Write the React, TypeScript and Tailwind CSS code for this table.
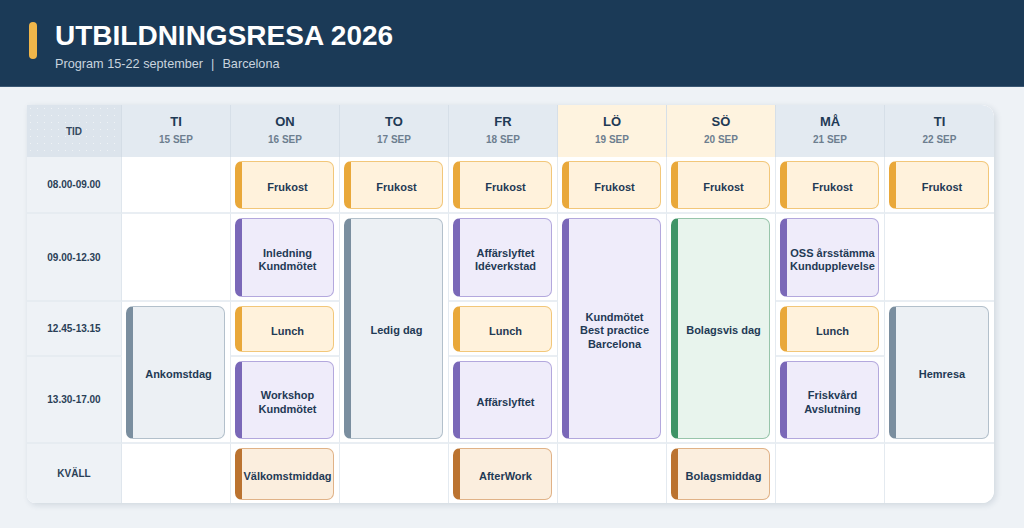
import React from "react";

type Kind = "o" | "p" | "g" | "gr" | "b";

const kindCls: Record<Kind, string> = {
  o: "bg-[#fff2dc] border-[#f2c77a] border-l-[#e9a83a]",
  p: "bg-[#efecfa] border-[#b3a8dd] border-l-[#7a68b8]",
  g: "bg-[#e8f4ed] border-[#98c5ab] border-l-[#3f9467]",
  gr: "bg-[#ecf0f4] border-[#b3c0cb] border-l-[#7a8e9f]",
  b: "bg-[#fbeede] border-[#e0b287] border-l-[#bb7330]",
};

const colStart = [
  "col-start-1",
  "col-start-2",
  "col-start-3",
  "col-start-4",
  "col-start-5",
  "col-start-6",
  "col-start-7",
  "col-start-8",
  "col-start-9",
];
const rowStart = ["row-start-1", "row-start-2", "row-start-3", "row-start-4", "row-start-5", "row-start-6"];
const rowSpan = ["row-span-1", "row-span-1", "row-span-2", "row-span-3"];

type Item = { row: number; span: number; kind?: Kind; lines?: string[] };

const days: { name: string; date: string; weekend?: boolean; items: Item[] }[] = [
  {
    name: "TI",
    date: "15 SEP",
    items: [
      { row: 1, span: 1 },
      { row: 2, span: 1 },
      { row: 3, span: 2, kind: "gr", lines: ["Ankomstdag"] },
      { row: 5, span: 1 },
    ],
  },
  {
    name: "ON",
    date: "16 SEP",
    items: [
      { row: 1, span: 1, kind: "o", lines: ["Frukost"] },
      { row: 2, span: 1, kind: "p", lines: ["Inledning", "Kundmötet"] },
      { row: 3, span: 1, kind: "o", lines: ["Lunch"] },
      { row: 4, span: 1, kind: "p", lines: ["Workshop", "Kundmötet"] },
      { row: 5, span: 1, kind: "b", lines: ["Välkomstmiddag"] },
    ],
  },
  {
    name: "TO",
    date: "17 SEP",
    items: [
      { row: 1, span: 1, kind: "o", lines: ["Frukost"] },
      { row: 2, span: 3, kind: "gr", lines: ["Ledig dag"] },
      { row: 5, span: 1 },
    ],
  },
  {
    name: "FR",
    date: "18 SEP",
    items: [
      { row: 1, span: 1, kind: "o", lines: ["Frukost"] },
      { row: 2, span: 1, kind: "p", lines: ["Affärslyftet", "Idéverkstad"] },
      { row: 3, span: 1, kind: "o", lines: ["Lunch"] },
      { row: 4, span: 1, kind: "p", lines: ["Affärslyftet"] },
      { row: 5, span: 1, kind: "b", lines: ["AfterWork"] },
    ],
  },
  {
    name: "LÖ",
    date: "19 SEP",
    weekend: true,
    items: [
      { row: 1, span: 1, kind: "o", lines: ["Frukost"] },
      { row: 2, span: 3, kind: "p", lines: ["Kundmötet", "Best practice", "Barcelona"] },
      { row: 5, span: 1 },
    ],
  },
  {
    name: "SÖ",
    date: "20 SEP",
    weekend: true,
    items: [
      { row: 1, span: 1, kind: "o", lines: ["Frukost"] },
      { row: 2, span: 3, kind: "g", lines: ["Bolagsvis dag"] },
      { row: 5, span: 1, kind: "b", lines: ["Bolagsmiddag"] },
    ],
  },
  {
    name: "MÅ",
    date: "21 SEP",
    items: [
      { row: 1, span: 1, kind: "o", lines: ["Frukost"] },
      { row: 2, span: 1, kind: "p", lines: ["OSS årsstämma", "Kundupplevelse"] },
      { row: 3, span: 1, kind: "o", lines: ["Lunch"] },
      { row: 4, span: 1, kind: "p", lines: ["Friskvård", "Avslutning"] },
      { row: 5, span: 1 },
    ],
  },
  {
    name: "TI",
    date: "22 SEP",
    items: [
      { row: 1, span: 1, kind: "o", lines: ["Frukost"] },
      { row: 2, span: 1 },
      { row: 3, span: 2, kind: "gr", lines: ["Hemresa"] },
      { row: 5, span: 1 },
    ],
  },
];

const times = ["08.00-09.00", "09.00-12.30", "12.45-13.15", "13.30-17.00", "KVÄLL"];

export default function App() {
  return (
    <div
      className="w-[1024px] h-[528px] bg-[#eef2f6] overflow-hidden"
      style={{ fontFamily: '"Liberation Sans", Arial, sans-serif' }}
    >
      <header className="h-[87px] bg-[#1b3a57] flex items-start pl-[29px] pt-[22px] border-b border-[#3b5874]">
        <div className="w-[8px] h-[37px] rounded-full bg-[#f0b64a]" />
        <div className="ml-[18px] -mt-[2px]">
          <h1 className="text-[28px] leading-[32px] font-bold text-white">UTBILDNINGSRESA 2026</h1>
          <p className="mt-[4px] text-[12.7px] leading-[16px] text-[#c9d4df]">
            Program 15-22 september<span className="mx-[8px]">|</span>Barcelona
          </p>
        </div>
      </header>

      <div className="ml-[27px] mt-[18px] w-[967px] bg-white rounded-tr-[12px] rounded-br-[12px] rounded-bl-[8px] overflow-hidden shadow-[2px_2px_6px_rgba(30,58,82,0.14)]">
        <div className="grid grid-cols-[95px_repeat(8,109px)] grid-rows-[52px_57px_88px_55px_87px_59px]">
          {/* header row */}
          <div className="col-start-1 row-start-1 bg-[#dce4ec] bg-[radial-gradient(rgba(255,255,255,0.55)_0.8px,transparent_1px)] bg-[size:7px_7px] border-r border-[#d4dde6] flex items-center justify-center text-[10px] font-bold text-[#34495f]">
            TID
          </div>
          {days.map((d, i) => (
            <div
              key={"h" + i}
              className={`${colStart[i + 1]} row-start-1 ${
                d.weekend ? "bg-[#fef3df]" : "bg-[#e3eaf1]"
              } ${i < 7 ? "border-r border-[#d6dfe8]" : "rounded-tr-[12px]"} flex flex-col items-center pt-[9px]`}
            >
              <div className="text-[13px] leading-[16px] font-bold text-[#1f3a55]">{d.name}</div>
              <div className="mt-[4px] text-[10px] leading-[12px] font-bold text-[#6d7e8f]">{d.date}</div>
            </div>
          ))}

          {/* time column */}
          {times.map((t, r) => (
            <div
              key={"t" + r}
              className={`col-start-1 ${rowStart[r + 1]} bg-[#eef2f6] border-r border-[#dfe6ed] ${
                r < 4 ? "border-b-2 border-b-[#e6ecf1]" : ""
              } flex items-center justify-center text-[10px] font-bold text-[#2a3f56]`}
            >
              {t}
            </div>
          ))}

          {/* day cells */}
          {days.map((d, i) =>
            d.items.map((it, k) => {
              const last = it.row + it.span - 1 === 5;
              return (
                <div
                  key={"c" + i + "-" + k}
                  className={`${colStart[i + 1]} ${rowStart[it.row]} ${rowSpan[it.span]} bg-white ${
                    i < 7 ? "border-r border-[#e4eaf0]" : ""
                  } ${last ? "" : "border-b-2 border-b-[#e9eef3]"} pl-[4px] pr-[5px] pt-[4px] pb-[3px] flex`}
                >
                  {it.kind && it.lines ? (
                    <div
                      className={`flex-1 rounded-[7px] border border-l-[7px] ${kindCls[it.kind]} flex flex-col items-center justify-center text-center text-[11px] leading-[13.5px] font-bold text-[#1f3a55] pt-[5px]`}
                    >
                      {it.lines.map((l, j) => (
                        <div key={j} className="whitespace-nowrap">
                          {l}
                        </div>
                      ))}
                    </div>
                  ) : null}
                </div>
              );
            })
          )}
        </div>
      </div>
    </div>
  );
}
